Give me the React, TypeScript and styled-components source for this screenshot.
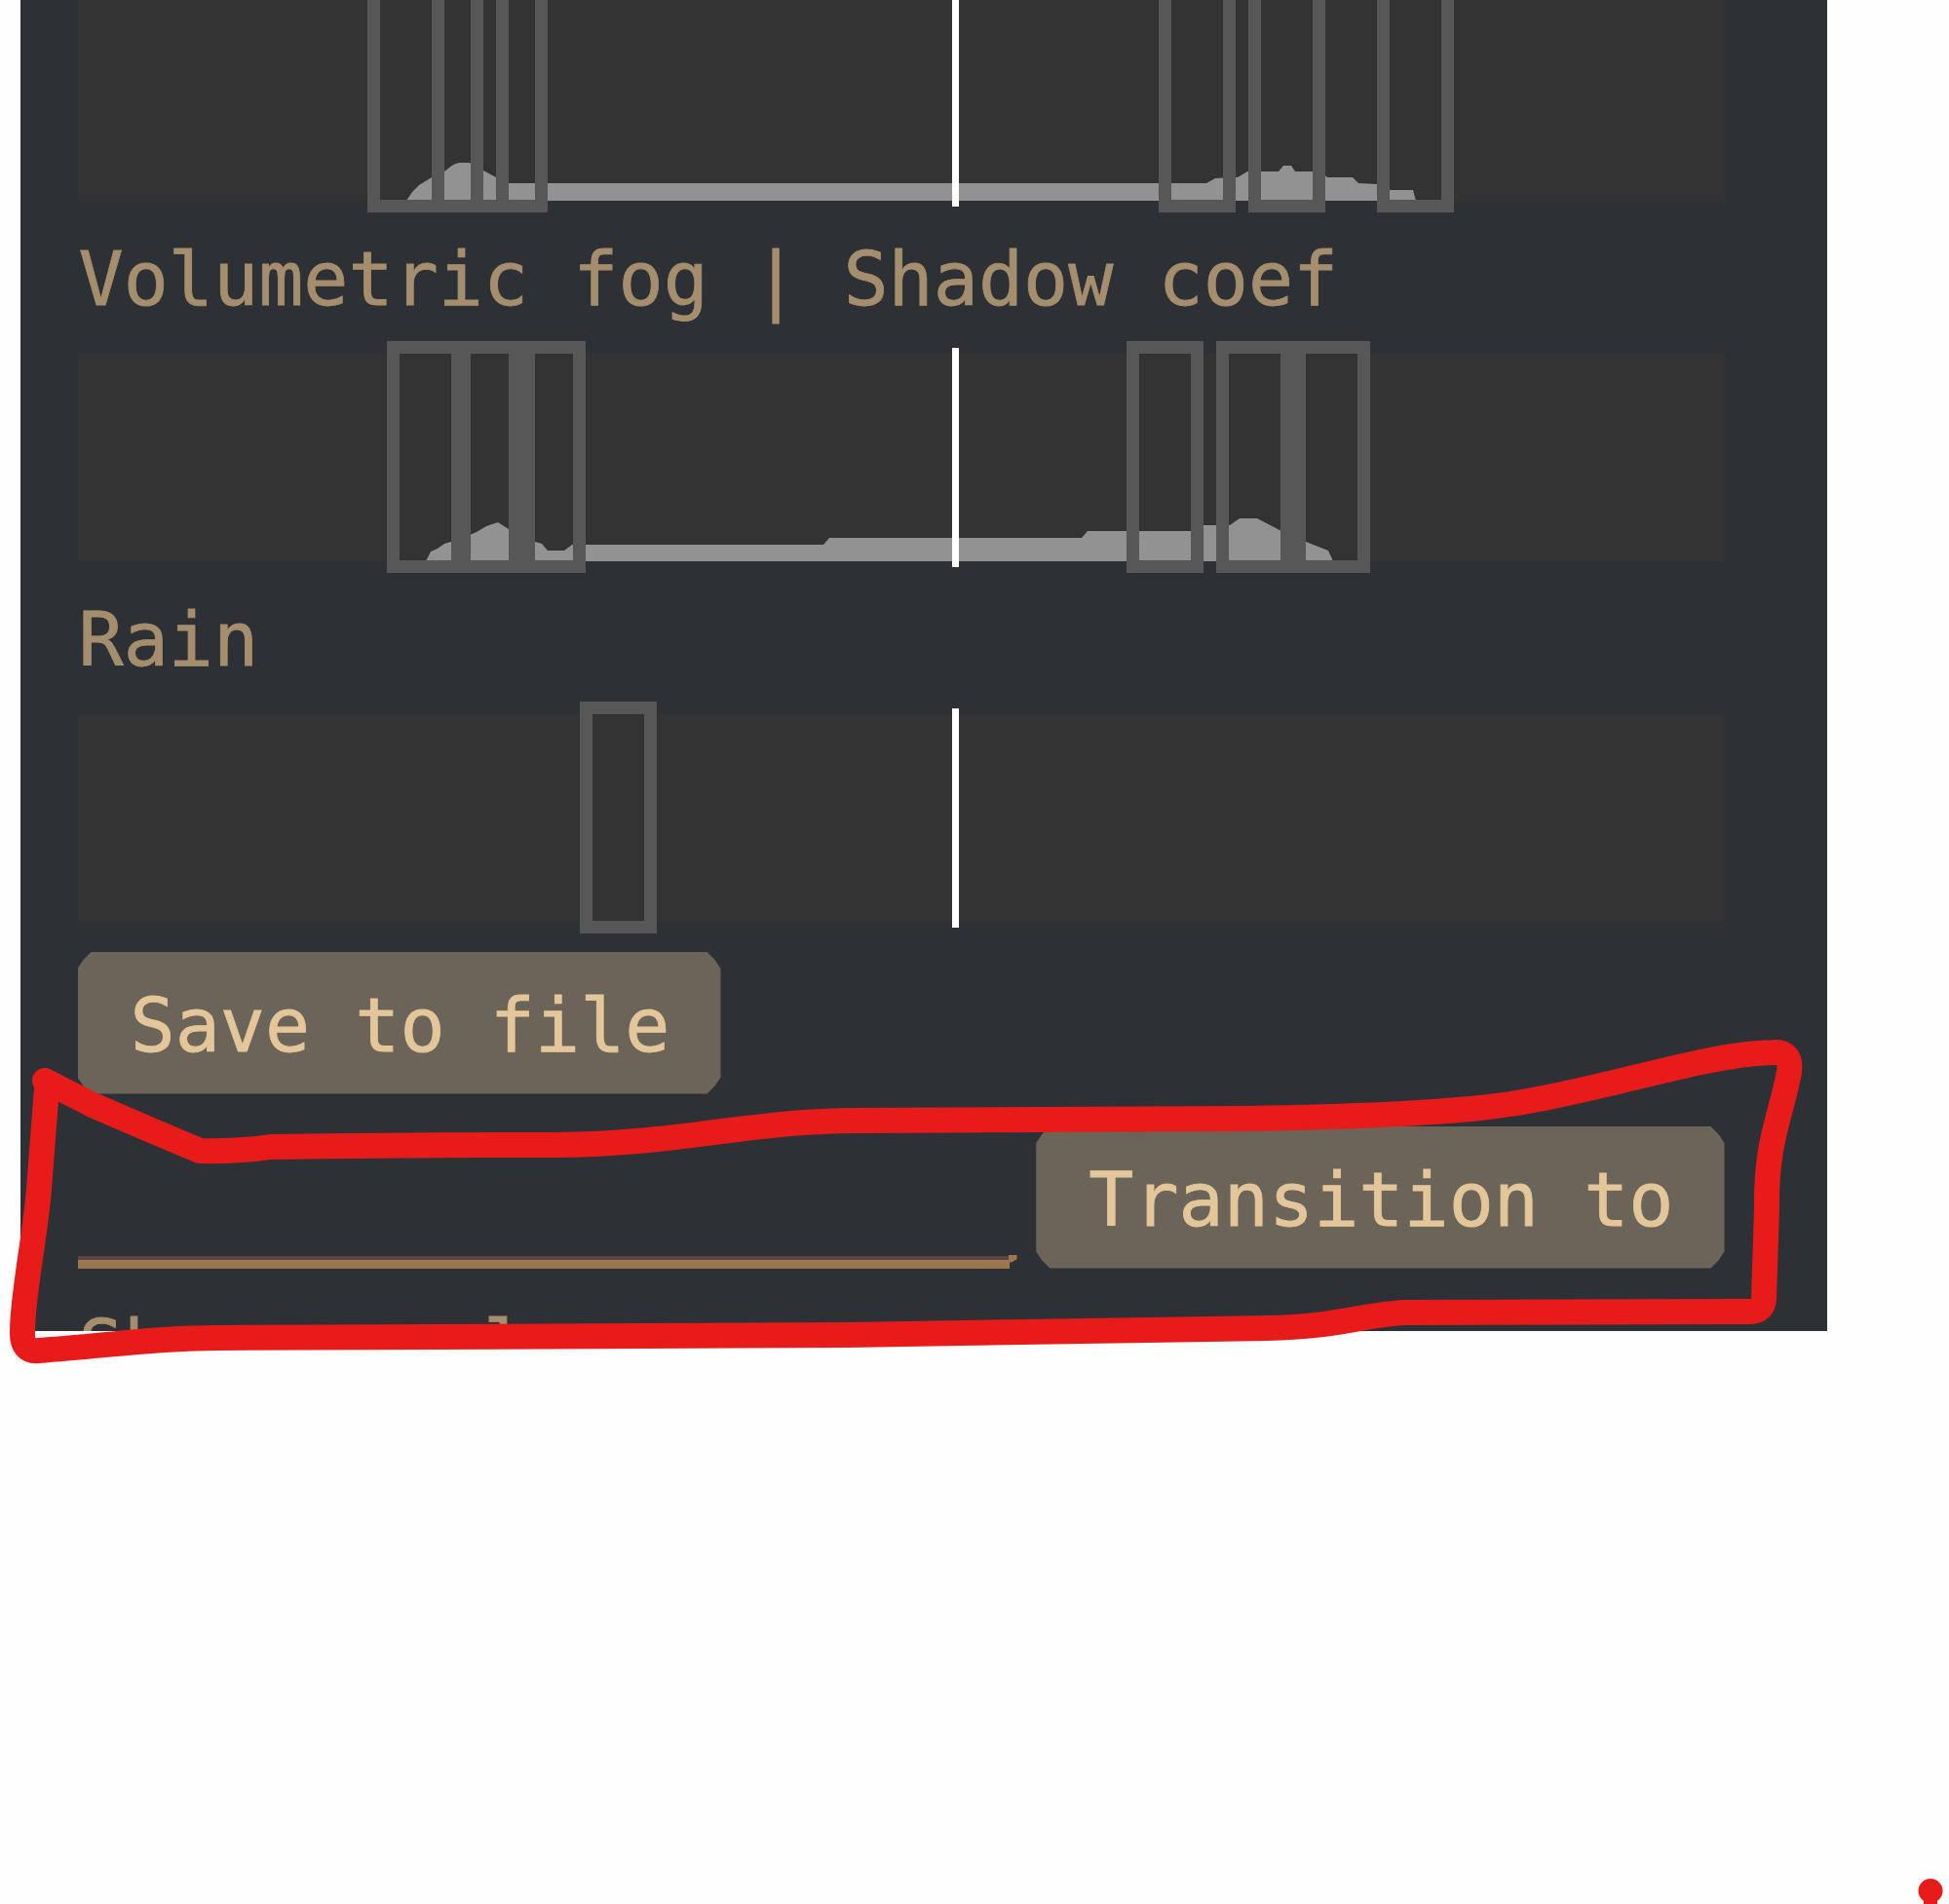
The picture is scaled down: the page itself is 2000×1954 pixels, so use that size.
import React from "react";
import styled, { createGlobalStyle } from "styled-components";

const GlobalStyle = createGlobalStyle`
  html, body { margin: 0; background: #fefefe; }
  body { overflow: hidden; }
  * { box-sizing: border-box; }
`;

const Page = styled.main`
  position: relative;
  width: 2000px;
  height: 1954px;
  overflow: hidden;
  padding-left: 20.5px;
  background: #fefefe;
  font-family: "DejaVu Sans Mono", monospace;
  font-size: 76.7px;
  -webkit-text-stroke: 0.8px currentColor;
`;

const Panel = styled.section`
  display: flex;
  flex-direction: column;
  width: 1854.5px;
  height: 1366px;
  overflow: hidden;
  padding: 0 105.5px 0 59px;
  background: #2d3035;
`;

const Track = styled.div<{ $height: number }>`
  position: relative;
  flex: none;
  height: ${(p) => p.$height}px;
  background: #333333;
`;

const Curve = styled.svg`
  position: absolute;
  left: 0;
  bottom: 0;
  width: 1690px;
  height: 213px;
`;

const Handle = styled.div<{ $x: number }>`
  position: absolute;
  left: ${(p) => p.$x}px;
  bottom: -12px;
  width: 79px;
  height: 238px;
  border: 13px solid #575757;
`;

const HandleOverlap = styled.div<{ $x: number; $width: number }>`
  position: absolute;
  left: ${(p) => p.$x}px;
  bottom: -12px;
  width: ${(p) => p.$width}px;
  height: 238px;
  background: #575757;
`;

const Marker = styled.div`
  position: absolute;
  left: 897.5px;
  bottom: -5.5px;
  width: 6.5px;
  height: 225px;
  background: #fff;
`;

const Label = styled.div`
  flex: none;
  height: 157px;
  padding: 4px 0 0 1px;
  line-height: 154px;
  color: #a58e6d;
  white-space: pre;
`;

const Button = styled.button`
  flex: none;
  height: 145.5px;
  padding: 3px 52px 0 54px;
  border: 0;
  font: inherit;
  line-height: 146px;
  white-space: pre;
  color: #e4c69b;
  background: #6b6459;
  clip-path: polygon(
    14px 0, calc(100% - 14px) 0, calc(100% - 6px) 8px, 100% 17px,
    100% calc(100% - 17px), calc(100% - 6px) calc(100% - 8px), calc(100% - 14px) 100%,
    14px 100%, 6px calc(100% - 8px), 0 calc(100% - 17px), 0 17px, 6px 8px
  );
`;

const SaveRow = styled.div`
  display: flex;
  flex: none;
  height: 146px;
  margin-top: 31px;
`;

const TransitionRow = styled.div`
  display: flex;
  flex: none;
  justify-content: space-between;
  height: 146px;
  margin-top: 33px;
`;

const NameField = styled.div`
  position: relative;
  width: 956px;
  height: 145.5px;
  border-bottom: 9px solid #9c7850;
  box-shadow: inset 0 -4px #584545;
`;

const FieldCorner = styled.span`
  position: absolute;
  right: -8px;
  bottom: -3px;
  width: 9px;
  height: 8px;
  background: #9c7850;
  clip-path: polygon(0 0, 100% 0, 100% 60%, 40% 100%, 0 100%);
`;

const Annotation = styled.svg`
  position: absolute;
  inset: 0;
  width: 2000px;
  height: 1954px;
  pointer-events: none;
`;

type Point = [number, number];

// Curve points: x from the track's left edge, y as height above its baseline.
const fogCurve: Point[] = [
  [337, 0], [343, 9], [350, 16], [363, 24], [376, 30], [385, 37], [391, 39], [401, 39],
  [405, 38], [416, 31], [429, 24], [440, 18], [1158, 18], [1167, 23], [1184, 24],
  [1190, 24], [1200, 30], [1232, 30], [1237, 36], [1245, 36], [1249, 30], [1276, 30],
  [1282, 24], [1308, 24], [1314, 18], [1333, 17], [1342, 11], [1370, 11], [1373, 0],
];

const shadowCurve: Point[] = [
  [357, 0], [362, 10], [369, 13], [376, 18], [383, 20], [402, 27], [409, 30], [419, 36],
  [431, 40], [442, 33], [469, 20], [476, 18], [482, 11], [499, 11], [507, 17], [765, 17],
  [771, 24], [1030, 24], [1036, 31], [1142, 31], [1155, 37], [1182, 37], [1192, 44],
  [1210, 44], [1233, 32], [1260, 20], [1283, 11], [1288, 0],
];

interface TimelineProps {
  height?: number;
  curve?: Point[];
  handles: number[];
  overlap?: { x: number; width: number };
}

function Timeline({ height = 213, curve, handles, overlap }: TimelineProps) {
  return (
    <Track $height={height}>
      {curve && (
        <Curve viewBox="0 0 1690 213">
          <polygon
            points={curve.map(([x, y]) => `${x},${213 - y}`).join(" ")}
            fill="#929292"
          />
        </Curve>
      )}
      {handles.map((x) => (
        <Handle key={x} $x={x} />
      ))}
      {overlap && <HandleOverlap $x={overlap.x} $width={overlap.width} />}
      <Marker />
    </Track>
  );
}

export default function App() {
  return (
    <>
      <GlobalStyle />
      <Page>
        <Panel>
          <Timeline
            height={206}
            curve={fogCurve}
            handles={[297.5, 363.5, 403, 1109, 1201.5, 1333.5]}
          />
          <Label>Volumetric fog | Shadow coef</Label>
          <Timeline
            curve={shadowCurve}
            handles={[317, 390, 442.5, 1076, 1168, 1247.5]}
            overlap={{ x: 442.5, width: 26.5 }}
          />
          <Label>Rain</Label>
          <Timeline handles={[515.5]} />
          <SaveRow>
            <Button>Save to file</Button>
          </SaveRow>
          <TransitionRow>
            <NameField>
              <FieldCorner />
            </NameField>
            <Button>Transition to</Button>
          </TransitionRow>
          <Label>Show panel</Label>
        </Panel>
        <Annotation viewBox="0 0 2000 1954">
          <path
            d="M46 1109 L95 1134 Q150 1158 205 1181 Q245 1182 277 1177 Q420 1175 571 1175 C700 1174 770 1150 880 1150 L1280 1148 Q1470 1145 1550 1133 C1650 1118 1745 1082 1820 1080 Q1839 1079 1836 1100 C1828 1145 1812 1170 1813 1240 L1810 1333 Q1809 1346 1796 1346 L1440 1347 C1395 1350 1370 1362 1300 1363 L870 1370 L223 1373 C160 1373 110 1381 40 1386 Q22 1388 23 1366 C23 1330 36 1270 40 1220 Q44 1170 48 1117"
            fill="none"
            stroke="#e81b1b"
            strokeWidth="26"
            strokeLinecap="round"
            strokeLinejoin="round"
          />
          <circle cx="1981" cy="1940.5" r="12.5" fill="#e81b1b" />
          <rect x="1974" y="1944" width="14" height="10" fill="#e81b1b" />
        </Annotation>
      </Page>
    </>
  );
}
